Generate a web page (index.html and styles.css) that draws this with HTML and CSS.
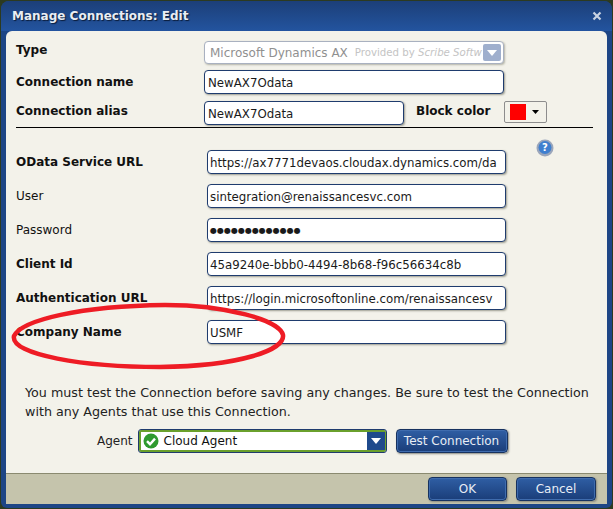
FILE: index.html
```html
<!DOCTYPE html>
<html lang="en">
<head>
    <meta charset="UTF-8">
    <meta name="viewport" content="width=device-width, initial-scale=1.0">
    <title>Manage Connections: Edit</title>
    <link rel="stylesheet" href="styles.css">
</head>
<body>
    <div class="dialog">
        <div class="title-bar">
            <span class="title">Manage Connections: Edit</span>
            <svg class="close" width="10" height="10" viewBox="0 0 10 10"><path d="M1.5 1.5l7 7M8.5 1.5l-7 7" stroke="#c9d3e2" stroke-width="2.2" fill="none"/></svg>
        </div>
        <div class="panel">
            <div class="form-top">
                <div class="row row-type">
                    <label class="label bold">Type</label>
                    <div class="type-select">
                        <span class="type-name">Microsoft Dynamics AX</span>
                        <span class="type-by">Provided by <i>Scribe Softw</i></span>
                        <span class="type-arrow"><svg width="10" height="6" viewBox="0 0 10 6"><path d="M0 0h10L5 6z" fill="#fff"/></svg></span>
                    </div>
                </div>
                <div class="row row-name">
                    <label class="label bold">Connection name</label>
                    <div class="field field-wide">NewAX7Odata</div>
                </div>
                <div class="row row-alias">
                    <label class="label bold">Connection alias</label>
                    <div class="field field-alias">NewAX7Odata</div>
                    <label class="label bold block-label">Block color</label>
                    <div class="color-pick">
                        <span class="swatch"></span>
                        <svg width="7" height="4" viewBox="0 0 7 4"><path d="M0 0h7L3.5 4z" fill="#000"/></svg>
                    </div>
                </div>
            </div>
            <hr class="divider">
            <svg class="help" width="18" height="18" viewBox="0 0 18 18">
                <circle cx="9" cy="9" r="8.5" fill="#9aa6bb"/>
                <circle cx="9" cy="8.5" r="6.5" fill="#3f7fcf"/>
                <text x="9" y="12" text-anchor="middle" class="help-mark">?</text>
            </svg>
            <div class="form-main">
                <div class="row"><label class="label bold">OData Service URL</label><div class="field field-long">https://ax7771devaos.cloudax.dynamics.com/da</div></div>
                <div class="row"><label class="label">User</label><div class="field field-long">sintegration@renaissancesvc.com</div></div>
                <div class="row"><label class="label">Password</label><div class="field field-long dots">●●●●●●●●●●●●●</div></div>
                <div class="row"><label class="label bold">Client Id</label><div class="field field-long">45a9240e-bbb0-4494-8b68-f96c56634c8b</div></div>
                <div class="row"><label class="label bold">Authentication URL</label><div class="field field-long">https://login.microsoftonline.com/renaissancesv</div></div>
                <div class="row"><label class="label bold">Company Name</label><div class="field field-long">USMF</div></div>
            </div>
            <p class="note">You must test the Connection before saving any changes. Be sure to test the Connection<br>with any Agents that use this Connection.</p>
            <div class="agent-row">
                <label class="agent-label">Agent</label>
                <div class="agent-select">
                    <svg class="agent-ok" width="16" height="16" viewBox="0 0 16 16">
                        <circle cx="8" cy="8" r="7.5" fill="#2f9a2f"/>
                        <path d="M4 8.2l3 3 5-5.6" stroke="#fff" stroke-width="2.4" fill="none"/>
                    </svg>
                    <span class="agent-name">Cloud Agent</span>
                    <span class="agent-arrow"><svg width="10" height="6" viewBox="0 0 10 6"><path d="M0 0h10L5 6z" fill="#fff"/></svg></span>
                </div>
                <button class="btn btn-test">Test Connection</button>
            </div>
        </div>
        <div class="footer">
            <button class="btn btn-ok">OK</button>
            <button class="btn btn-cancel">Cancel</button>
        </div>
    </div>
    <!-- red hand drawn ring around company name -->
    <svg class="ring" width="300" height="72" viewBox="0 0 300 72">
        <path d="M14 36C22 20 80 6 165 5C225 5 280 20 283 35C285 50 240 66 160 67C85 67 10 55 14 36Z" fill="none" stroke="#ee1c25" stroke-width="4.5"/>
    </svg>
</body>
</html>
```

FILE: styles.css
```css
body {
    margin: 0;
    width: 613px;
    height: 509px;
    overflow: hidden;
    position: relative;
    background: #2c3a20;
    font-family: 'DejaVu Sans', sans-serif;
    font-size: 12px;
    color: #111;
}
.dialog {
    margin: 1px 0 0 1px;
    width: 611px;
    height: 507px;
    box-sizing: border-box;
    padding: 0 5px 4px;
    background: #1d4585;
    border-radius: 8px 8px 6px 6px;
    display: flex;
    flex-direction: column;
}
.title-bar {
    height: 30px;
    margin: 0 -5px;
    padding: 0 10px 0 11px;
    flex: none;
    display: flex;
    justify-content: space-between;
    align-items: center;
    background: linear-gradient(#1c3f78, #23549f);
    border-radius: 8px 8px 0 0;
}
.title {
    color: #e9edf3;
    font-weight: bold;
    font-size: 12px;
    text-shadow: 1px 1px 1px #0a1c3a;
}
.panel {
    flex: 1;
    background: #f3f2ea;
    border-radius: 6px 6px 0 0;
    padding: 10px 10px 0;
    position: relative;
    border-bottom: 1px solid #8a8a70;
}
.row {
    display: flex;
    align-items: flex-start;
}
.label {
    width: 188px;
    flex: none;
    line-height: 17px;
    padding-top: 4px;
}
.bold {
    font-weight: bold;
}
.row-type .label {
    padding-top: 1px;
}
.row-alias .label {
    padding-top: 2px;
}
.form-top .row-type {
    height: 29px;
}
.form-top .row-name {
    height: 31px;
}
.form-top .row-alias {
    height: 26px;
}
.field {
    box-sizing: border-box;
    height: 24px;
    line-height: 24px;
    padding: 0 3px;
    background: #fff;
    border: 1px solid #1f3c6e;
    border-radius: 4px;
    box-shadow: 1px 1px 2px #9c9c90;
    white-space: nowrap;
    overflow: hidden;
    font-size: 11.8px;
    color: #1a1a1a;
}
.field-wide {
    width: 300px;
}
.field-alias {
    width: 200px;
}
.field-long {
    width: 299px;
    margin-left: 3px;
    padding-left: 2px;
}
.dots {
    font-size: 8px;
}
.type-select {
    box-sizing: border-box;
    width: 300px;
    height: 23px;
    background: #fff;
    border: 1px solid #a9b1c0;
    border-radius: 4px;
    box-shadow: 1px 1px 2px #b4b4a8;
    display: flex;
    align-items: center;
    padding-left: 5px;
    position: relative;
    overflow: hidden;
}
.type-name {
    color: #909090;
    white-space: nowrap;
}
.type-by {
    color: #c4c4c4;
    font-size: 10.2px;
    margin-left: 7px;
    white-space: nowrap;
}
.type-arrow {
    position: absolute;
    right: 2px;
    top: 2px;
    width: 18px;
    height: 17px;
    background: #9fafcd;
    border-radius: 2px;
    display: flex;
    align-items: center;
    justify-content: center;
}
.block-label {
    width: auto;
    margin-left: 12px;
}
.color-pick {
    box-sizing: border-box;
    width: 43px;
    height: 22px;
    margin-left: 14px;
    border: 1px solid #8d8d8d;
    border-radius: 2px;
    padding: 0 7px 0 5px;
    display: flex;
    align-items: center;
    justify-content: space-between;
}
.swatch {
    width: 16px;
    height: 16px;
    background: #f00;
}
.divider {
    margin: 0;
    height: 1px;
    border: 0;
    background: #000;
    width: 577px;
}
.help {
    position: absolute;
    left: 530px;
    top: 108px;
}
.help-mark {
    font-size: 10px;
    font-weight: bold;
    fill: #fff;
}
.form-main {
    margin-top: 22px;
    display: flex;
    flex-direction: column;
    gap: 10px;
}
.note {
    margin: 0;
    padding: 39px 0 0 9px;
    font-size: 12.7px;
    line-height: 19px;
    white-space: nowrap;
    color: #222;
}
.agent-row {
    display: flex;
    align-items: center;
    margin-top: 8px;
    padding-left: 81px;
}
.agent-label {
    color: #222;
    margin-right: 5px;
}
.agent-select {
    box-sizing: border-box;
    width: 249px;
    height: 24px;
    background: #fff;
    border: 1px solid #1f3c6e;
    border-radius: 3px;
    box-shadow: inset 0 0 0 2px #6aa02c;
    display: flex;
    align-items: center;
    padding-left: 4px;
    position: relative;
    overflow: hidden;
}
.agent-name {
    margin-left: 5px;
}
.agent-arrow {
    position: absolute;
    right: 1px;
    top: 2px;
    width: 18px;
    height: 18px;
    background: #1f4a8c;
    display: flex;
    align-items: center;
    justify-content: center;
}
.btn {
    box-sizing: border-box;
    font-family: 'DejaVu Sans', sans-serif;
    font-size: 12px;
    color: #e8edf5;
    background: linear-gradient(#2f5ea4, #1a3d79);
    border: 1px solid #17325f;
    border-radius: 4px;
    box-shadow: inset 0 0 0 1px #3f6cae, 1px 1px 2px #8a8a80;
    padding: 0;
}
.btn-test {
    width: 112px;
    height: 24px;
    margin-left: 9px;
}
.footer {
    flex: none;
    height: 30px;
    background: #c5c4ac;
    display: flex;
    justify-content: flex-end;
    align-items: flex-start;
    gap: 9px;
    padding: 0 11px 0 0;
}
.btn-ok,
.btn-cancel {
    height: 24px;
    margin-top: 3px;
}
.btn-ok {
    width: 79px;
}
.btn-cancel {
    width: 80px;
}
.ring {
    position: absolute;
    left: 0;
    top: 300px;
}
```
